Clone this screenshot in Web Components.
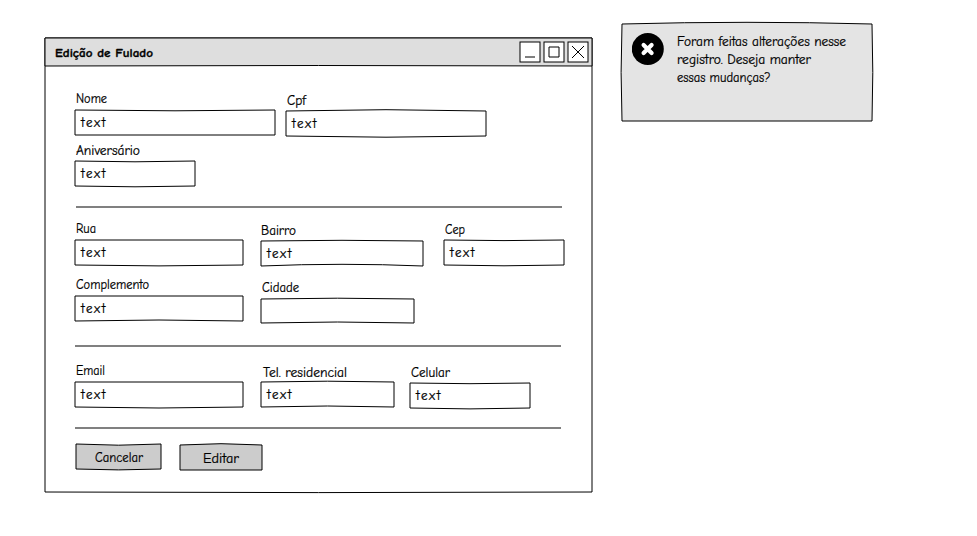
<!DOCTYPE html>
<html lang="pt-BR">
<head>
<meta charset="utf-8">
<title>Edição de Fulado</title>
<style>
body { margin: 0; background: #fff; color: #000; font: 13px "Comic Sans MS", "Comic Neue", "Open Sans", sans-serif; }
main { display: flex; align-items: flex-start; padding: 24px 0 0 45px; width: 932px; height: 512px; box-sizing: border-box; }
sk-window { margin-top: 14px; }
sk-alert { margin-left: 30px; }
.row { display: flex; align-items: flex-start; }
</style>
</head>
<body>
<main>
  <sk-window heading="Edição de Fulado">
    <div class="row">
      <sk-field label="Nome" lw="31" w="200" gap="2" value="text" bend="0.8,0,0,0"></sk-field>
      <sk-field label="Cpf" lw="19" w="200" gap="1" value="text" bend="-1.3,0,1.2,0" style="margin:2px 0 0 11px"></sk-field>
    </div>
    <div class="row" style="margin-top:6px">
      <sk-field label="Aniversário" lw="64" w="120" gap="1" value="text" bend="0.8,0,0.8,0"></sk-field>
    </div>
    <sk-rule style="margin:20px 0 0 1px"></sk-rule>
    <div class="row" style="margin-top:12px">
      <sk-field label="Rua" lw="20" w="168" gap="2" value="text" bend="0,0,0.9,0"></sk-field>
      <sk-field label="Bairro" lw="35" lx="0" w="162" gap="1" value="text" bend="-0.7,0,-1.7,0" style="margin:2px 0 0 18px"></sk-field>
      <sk-field label="Cep" lw="20" w="120" gap="1" value="text" bend="0.6,0,0.8,0" style="margin:1px 0 0 21px"></sk-field>
    </div>
    <div class="row" style="margin-top:10px">
      <sk-field label="Complemento" lw="73" w="168" gap="2" value="text" bend="0,0,-1,0"></sk-field>
      <sk-field label="Cidade" lw="37" w="153" h="24" gap="2" bend="-0.8,0,-1,0" style="margin:3px 0 0 18px"></sk-field>
    </div>
    <sk-rule style="margin-top:22px"></sk-rule>
    <div class="row" style="margin-top:15px">
      <sk-field label="Email" lw="29" w="168" gap="2" value="text" bend="0,0,1,0"></sk-field>
      <sk-field label="Tel. residencial" lx="2" lw="84" w="133" gap="0" value="text" bend="-0.8,0,-1,0" style="margin:2px 0 0 18px"></sk-field>
      <sk-field label="Celular" lw="39" w="120" gap="1" value="text" bend="0.7,0,0.9,0" style="margin:2px 0 0 16px"></sk-field>
    </div>
    <sk-rule style="margin-top:19px"></sk-rule>
    <div class="row" style="margin-top:15px">
      <sk-button label="Cancelar" lw="48" lx="19" w="85" bend="1.2,0,0.9,0" style="margin-left:1px"></sk-button>
      <sk-button label="Editar" lw="36" lx="23" w="82" bend="-1.3,0,0,0" style="margin:1px 0 0 19px"></sk-button>
    </div>
  </sk-window>
  <sk-alert></sk-alert>
</main>
<script>
class SkElement extends HTMLElement {
  connectedCallback() {
    if (!this.shadowRoot) this.attachShadow({ mode: "open" }).innerHTML = this.render();
  }
  n(name, fallback = 0) {
    return this.hasAttribute(name) ? Number(this.getAttribute(name)) : fallback;
  }
}

// A single line of text fitted to a given width; its baseline is 13px from the top.
customElements.define("sk-text", class extends SkElement {
  render() {
    const w = this.n("w"), bold = this.hasAttribute("bold");
    return `<style>:host{display:block;width:${w}px;height:18px;flex:none}svg{display:block;overflow:visible}
      text{font-size:${this.n("size", 13)}px;font-weight:${bold ? 700 : 400};fill:#000;stroke:#000;stroke-width:${bold ? 0.35 : 0.22}px}</style>
      <svg width="${w}" height="18"><text x="0" y="13.4" textLength="${w}" lengthAdjust="${this.getAttribute("adjust") || "spacingAndGlyphs"}">${this.getAttribute("text")}</text></svg>`;
  }
});

// A hand-drawn box; bend bows the top, right, bottom and left edges.
customElements.define("sk-box", class extends SkElement {
  render() {
    const w = this.n("w"), h = this.n("h"), fill = this.getAttribute("fill") || "#fff";
    const [t, r, b, l] = (this.getAttribute("bend") || "0,0,0,0").split(",").map(Number);
    return `<style>:host{display:grid;width:${w}px;height:${h}px;flex:none}
      svg,div{grid-area:1/1;display:block;overflow:visible;min-width:0}</style>
      <svg width="${w}" height="${h}"><path d="M0 0Q${w / 2} ${2 * t} ${w} 0Q${w + 2 * r} ${h / 2} ${w} ${h}Q${w / 2} ${h + 2 * b} 0 ${h}Q${2 * l} ${h / 2} 0 0Z" fill="${fill}" stroke="#000" stroke-linejoin="round"/></svg>
      <div><slot></slot></div>`;
  }
});

customElements.define("sk-field", class extends SkElement {
  render() {
    const value = this.getAttribute("value"), w = this.n("w");
    return `<style>:host{display:flex;flex-direction:column;width:${w}px;flex:none}
      .label{padding:0 0 ${this.n("gap")}px ${this.n("lx", 1)}px}.value{padding:4px 0 0 5.5px}</style>
      <div class="label"><sk-text text="${this.getAttribute("label")}" w="${this.n("lw")}"></sk-text></div>
      <sk-box w="${w}" h="${this.n("h", 25)}" bend="${this.getAttribute("bend")}">
      ${value ? `<div class="value"><sk-text text="${value}" w="24.5" adjust="spacing"></sk-text></div>` : ""}</sk-box>`;
  }
});

customElements.define("sk-rule", class extends SkElement {
  render() {
    return `<style>:host{display:block;width:486px;height:2px;background:#808080}</style>`;
  }
});

customElements.define("sk-button", class extends SkElement {
  render() {
    return `<style>:host{display:block;flex:none}.t{padding:5px 0 0 ${this.n("lx")}px}</style>
      <sk-box w="${this.n("w")}" h="25" fill="#ccc" bend="${this.getAttribute("bend")}">
      <div class="t"><sk-text text="${this.getAttribute("label")}" w="${this.n("lw")}"></sk-text></div></sk-box>`;
  }
});

customElements.define("sk-window", class extends SkElement {
  render() {
    const icon = d => `<svg width="20" height="20"><rect width="20" height="20" fill="#fff" stroke="#000"/><path d="${d}" fill="none" stroke="#000"/></svg>`;
    return `<style>:host{display:block;flex:none}
      .bar{display:flex;justify-content:space-between;padding:4px 4px 0 10px}
      .title{padding-top:2px}.icons{display:flex;gap:4px}svg{display:block;overflow:visible}
      .content{padding:24px 0 0 30px}</style>
      <sk-box w="547" h="454" bend="0,0,0.6,0">
        <sk-box w="547" h="28" fill="#dedede" bend="0,0,-0.5,0">
          <div class="bar"><div class="title"><sk-text bold size="12.5" text="${this.getAttribute("heading")}" w="98"></sk-text></div>
          <div class="icons">${icon("M5 15H15")}${icon("M5 5H15V15H5Z")}${icon("M4 4L16 16M16 4L4 16")}</div></div>
        </sk-box>
        <div class="content"><slot></slot></div>
      </sk-box>`;
  }
});

customElements.define("sk-alert", class extends SkElement {
  render() {
    return `<style>:host{display:block;flex:none}.in{display:flex;gap:13px;padding:9px 0 0 10px}
      svg{display:block;flex:none}</style>
      <sk-box w="250" h="97" fill="#e4e4e4" bend="-1.7,0.8,0,-0.9"><div class="in">
        <svg width="32" height="32" viewBox="0 0 32 32"><circle cx="15.8" cy="16" r="16" fill="#000"/><path d="M11.6 12L19.6 20M19.6 12L11.6 20" stroke="#fff" stroke-width="4.2" stroke-linecap="round"/></svg>
        <div><sk-text text="Foram feitas alterações nesse" w="169"></sk-text>
        <sk-text text="registro. Deseja manter" w="134"></sk-text>
        <sk-text text="essas mudanças?" w="93.5"></sk-text></div>
      </div></sk-box>`;
  }
});
</script>
</body>
</html>
